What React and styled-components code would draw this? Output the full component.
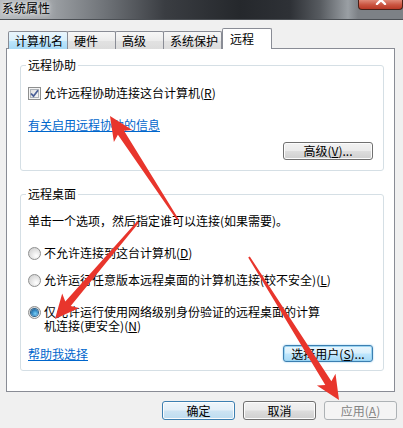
import React from "react";
import styled, { createGlobalStyle, css } from "styled-components";

const GlobalStyle = createGlobalStyle`
	html, body {
		margin: 0;
		padding: 0;
		background: #f0f0f0;
	}
	body {
		font-family: "Noto Sans CJK SC", "Noto Sans", sans-serif;
		font-size: 12px;
		color: #000;
	}
`;

const Window = styled.div`
	position: relative;
	width: 403px;
	height: 428px;
	overflow: hidden;
	background: #f0f0f0;
	display: flex;
	flex-direction: column;
`;

const TitleBar = styled.div`
	flex: none;
	height: 19px;
	display: flex;
	align-items: flex-start;
	justify-content: space-between;
	background: linear-gradient(90deg, #b7bbbf 0, #a2a6aa 45px, #6f7378 105px, #3a3d42 165px, #25282c 240px, #2e3136 290px, #575b60 320px, #9a9fa4 348px, #7d8186 358px);
	border-bottom: 1px solid #4b4f54;
`;

const Title = styled.span`
	padding: 1px 0 0 2px;
	line-height: 14px;
	color: #000;
	text-shadow: 0 0 4px #fff, 0 0 8px #e6e8ea;
`;

const CloseButton = styled.div`
	width: 45px;
	height: 10px;
	box-sizing: border-box;
	border: 1px solid #4a1f17;
	border-top: none;
	border-radius: 0 0 4px 4px;
	background: linear-gradient(#e08a78, #c9533f 55%, #b93a27);
	display: flex;
	justify-content: center;
	align-items: flex-start;
	overflow: hidden;
`;

const Body = styled.div`
	flex: 1;
	padding: 8px 8px 0 6px;
	display: flex;
	flex-direction: column;
`;

const TabRow = styled.div`
	display: flex;
	align-items: flex-end;
	height: 21px;
	padding-left: 2px;
	position: relative;
	z-index: 1;
`;

const Tab = styled.div`
	box-sizing: border-box;
	height: 18px;
	width: ${({ $w }) => $w}px;
	padding-left: 6px;
	line-height: 17px;
	border: 1px solid #898c95;
	border-bottom: none;
	border-radius: 2px 2px 0 0;
	background: ${({ $hover }) =>
		$hover
			? "linear-gradient(#eaf6fd, #d9f0fc 50%, #bee6fd 51%, #a7d9f5)"
			: "linear-gradient(#f7f7f7, #ececec 50%, #e2e2e2 51%, #dcdcdc)"};
	margin-left: -1px;
	&:first-child {
		margin-left: 0;
	}

	${({ $active }) =>
		$active &&
		css`
			height: 21px;
			margin-left: 0;
			padding-left: 7px;
			line-height: 19px;
			background: #fff;
		`}
`;

const Panel = styled.div`
	box-sizing: border-box;
	height: 344px;
	margin-top: -1px;
	border: 1px solid #898c95;
	background: #fff;
	padding: 9px 10px 0 13px;
	display: flex;
	flex-direction: column;
`;

const Group = styled.fieldset`
	margin: ${({ $top }) => $top || 0}px 0 0 0;
	padding: ${({ $pad }) => $pad};
	border: 1px solid #d5dfe5;
	border-radius: 3px;
	min-width: 0;
	display: flex;
	flex-direction: column;
	align-items: flex-start;
`;

const Legend = styled.legend`
	padding: 0 2px;
	margin-left: -2px;
	line-height: 14px;
	color: #000;
`;

const Row = styled.div`
	display: flex;
	align-items: ${({ $align }) => $align || "center"};
	line-height: ${({ $lh }) => $lh || 14}px;
	margin-top: ${({ $mt }) => $mt || 0}px;
	align-self: stretch;
	justify-content: ${({ $justify }) => $justify || "flex-start"};
`;

const Label = styled.span`
	margin-left: 3px;
	white-space: nowrap;
`;

const Link = styled.span`
	color: #0066cc;
	text-decoration: underline;
	line-height: 14px;
	cursor: pointer;
`;

const CheckBox = styled.span`
	flex: none;
	box-sizing: border-box;
	width: 13px;
	height: 13px;
	border: 1px solid #8e8f8f;
	box-shadow: inset 0 0 0 1px #f4f4f4, inset 0 0 0 2px #aeb3b9;
	background: linear-gradient(135deg, #dcdcdc, #fbfbfb);
	display: flex;
	align-items: center;
	justify-content: center;
`;

const Radio = styled.span`
	flex: none;
	box-sizing: border-box;
	width: 13px;
	height: 13px;
	margin-top: ${({ $mt }) => $mt || 0}px;
	border-radius: 50%;
	border: 1px solid #8e8f8f;
	background: radial-gradient(circle at 65% 70%, #ffffff 0, #e6e6e6 45%, #c9c9c9 100%);
	display: flex;
	align-items: center;
	justify-content: center;

	${({ $checked }) =>
		$checked &&
		css`
			&::after {
				content: "";
				width: 7px;
				height: 7px;
				border-radius: 50%;
				background: radial-gradient(circle at 60% 65%, #7ad0f6 0, #3a8fc9 45%, #114a7a 100%);
				box-shadow: 0 0 0 1px #2c628b;
			}
		`}
`;

const Button = styled.div`
	box-sizing: border-box;
	width: ${({ $w }) => $w}px;
	height: ${({ $h }) => $h}px;
	border: 1px solid #707070;
	border-radius: 3px;
	box-shadow: inset 0 0 0 1px #fcfcfc;
	background: linear-gradient(#f2f2f2, #ebebeb 48%, #dddddd 52%, #cfcfcf);
	display: flex;
	align-items: center;
	justify-content: center;
	line-height: 14px;
	white-space: nowrap;

	${({ $variant }) =>
		$variant === "focus" &&
		css`
			border-color: #3c7fb1;
			box-shadow: inset 0 0 0 1px #9ad4f2, 0 0 2px #8ccaef;
			background: linear-gradient(#eaf6fd, #d9f0fc 48%, #bee6fd 52%, #a7d9f5);
		`}

	${({ $variant }) =>
		$variant === "default" &&
		css`
			border-color: #3c7fb1;
			background: linear-gradient(#eef6fb, #e3eff8 48%, #cde4f3 52%, #bddcf0);
		`}

	${({ $variant }) =>
		$variant === "disabled" &&
		css`
			border-color: #adb2b5;
			box-shadow: none;
			background: #f4f4f4;
			color: #838383;
		`}
`;

const Footer = styled.div`
	display: flex;
	justify-content: flex-end;
	gap: 8px;
	margin-top: 9px;
	margin-right: -2px;
`;

const Overlay = styled.svg`
	position: absolute;
	left: 0;
	top: 0;
	pointer-events: none;
`;

const arrowPoints = (x1, y1, x2, y2) => {
	const head = 24;
	const headW = 11;
	const shaftW = 3.6;
	const tailW = 1;
	const dx = x2 - x1;
	const dy = y2 - y1;
	const len = Math.hypot(dx, dy);
	const ux = dx / len;
	const uy = dy / len;
	const nx = -uy;
	const ny = ux;
	const bx = x2 - ux * head;
	const by = y2 - uy * head;
	const nb = 4;
	const pts = [
		[x1 + nx * tailW, y1 + ny * tailW],
		[bx + ux * nb + nx * shaftW, by + uy * nb + ny * shaftW],
		[bx + nx * headW, by + ny * headW],
		[x2, y2],
		[bx - nx * headW, by - ny * headW],
		[bx + ux * nb - nx * shaftW, by + uy * nb - ny * shaftW],
		[x1 - nx * tailW, y1 - ny * tailW],
	];
	return pts.map((p) => p.map((v) => v.toFixed(1)).join(",")).join(" ");
};

// 截图上的红色标注箭头: 尾 -> 尖
const arrows = [
	[178, 220, 110, 116],
	[138, 222, 55, 319],
	[249, 257, 339, 400],
];

const Key = ({ k }) => (
	<>
		(<u>{k}</u>)
	</>
);

const App = () => (
	<>
		<GlobalStyle />
		<Window>
			<TitleBar>
				<Title>系统属性</Title>
				<CloseButton>
					<svg width="12" height="10" viewBox="0 0 12 10" style={{ marginTop: -5 }}>
						<path d="M2 1 L10 9 M10 1 L2 9" stroke="#fff" strokeWidth="2.4" strokeLinecap="round" />
					</svg>
				</CloseButton>
			</TitleBar>
			<Body>
				<TabRow>
					<Tab $w={60} $hover>计算机名</Tab>
					<Tab $w={49}>硬件</Tab>
					<Tab $w={49}>高级</Tab>
					<Tab $w={59}>系统保护</Tab>
					<Tab $w={50} $active>远程</Tab>
				</TabRow>
				<Panel>
					<Group $pad="14px 10px 10px 7px">
						<Legend>远程协助</Legend>
						<Row>
							<CheckBox>
								<svg width="9" height="9" viewBox="0 0 9 9">
									<path d="M1 4.5 L3.5 7.2 L8 1.3" fill="none" stroke="#4a5f97" strokeWidth="1.8" />
								</svg>
							</CheckBox>
							<Label>
								允许远程协助连接这台计算机<Key k="R" />
							</Label>
						</Row>
						<Row $mt={18}>
							<Link>有关启用远程协助的信息</Link>
						</Row>
						<Row $mt={10} $justify="flex-end">
							<Button $w={90} $h={18}>
								高级(<u>V</u>)...
							</Button>
						</Row>
					</Group>
					<Group $top={16} $pad="13px 10px 8px 7px">
						<Legend>远程桌面</Legend>
						<Row>单击一个选项，然后指定谁可以连接(如果需要)。</Row>
						<Row $mt={18}>
							<Radio />
							<Label>
								不允许连接到这台计算机<Key k="D" />
							</Label>
						</Row>
						<Row $mt={13}>
							<Radio />
							<Label>
								允许运行任意版本远程桌面的计算机连接(较不安全)<Key k="L" />
							</Label>
						</Row>
						<Row $mt={18} $align="flex-start" $lh={14}>
							<Radio $checked $mt={1} />
							<Label>
								仅允许运行使用网络级别身份验证的远程桌面的计算
								<br />
								机连接(更安全)<Key k="N" />
							</Label>
						</Row>
						<Row $mt={12} $justify="space-between">
							<Link>帮助我选择</Link>
							<Button $w={90} $h={17} $variant="focus">
								选择用户(<u>S</u>)...
							</Button>
						</Row>
					</Group>
				</Panel>
				<Footer>
					<Button $w={73} $h={19} $variant="default">确定</Button>
					<Button $w={73} $h={19}>取消</Button>
					<Button $w={73} $h={19} $variant="disabled">
						应用(<u>A</u>)
					</Button>
				</Footer>
			</Body>
			<Overlay width="403" height="428" viewBox="0 0 403 428">
				{arrows.map(([x1, y1, x2, y2], i) => (
					<polygon key={i} points={arrowPoints(x1, y1, x2, y2)} fill="#e8352c" />
				))}
			</Overlay>
		</Window>
	</>
);

export default App;
